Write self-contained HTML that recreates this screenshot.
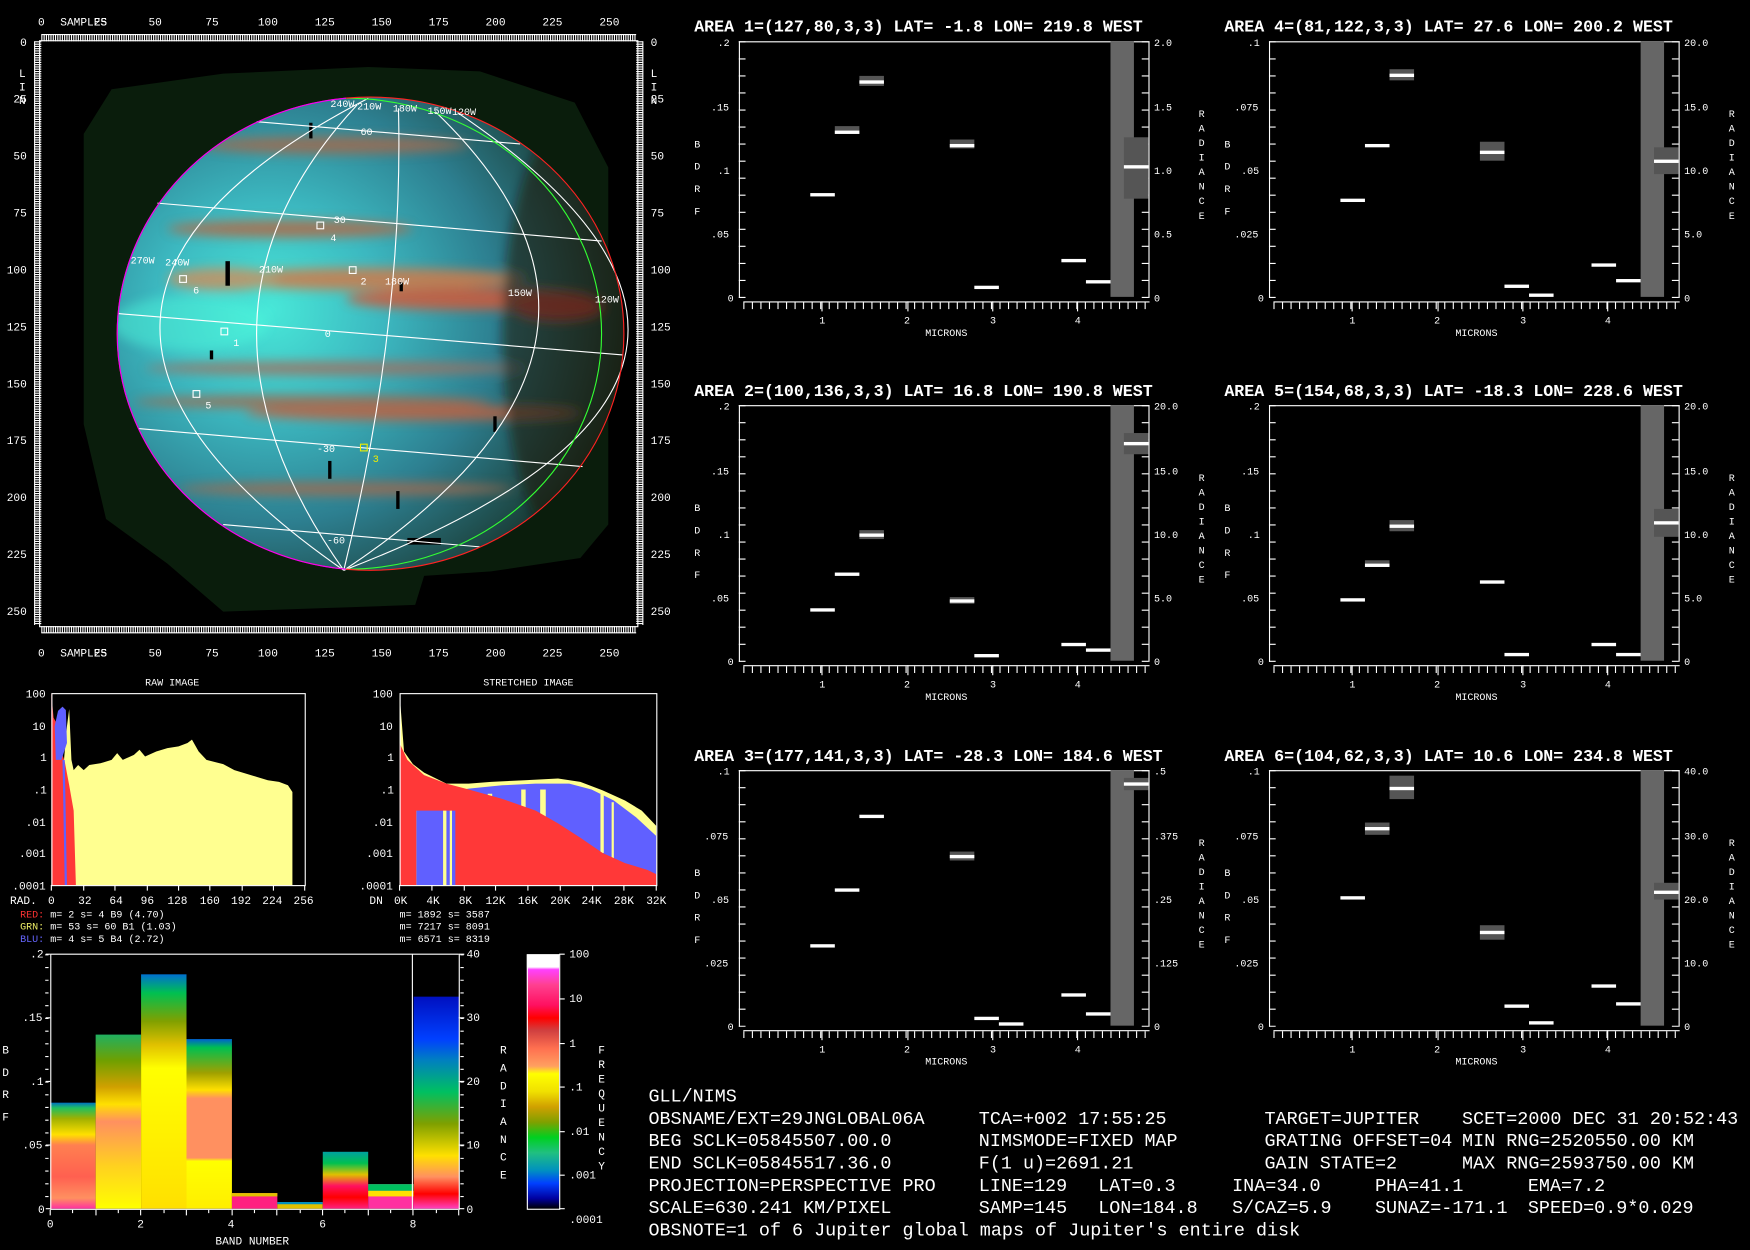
<!DOCTYPE html>
<html><head><meta charset="utf-8"><style>
html,body{margin:0;padding:0;background:#000;width:1750px;height:1250px;overflow:hidden}
svg{display:block}
text{font-family:"Liberation Mono",monospace;fill:#fff}
</style></head><body>
<svg width="1750" height="1250" viewBox="0 0 1568 1120" xmlns="http://www.w3.org/2000/svg">
<defs>
<radialGradient id="pl" cx="0.3" cy="0.45" r="0.75">
<stop offset="0" stop-color="#48e8d8"/><stop offset="0.3" stop-color="#3cb8c0"/><stop offset="0.6" stop-color="#2d7f90"/><stop offset="0.85" stop-color="#1e4a48"/><stop offset="1" stop-color="#10251a"/>
</radialGradient>
<filter id="bl"><feGaussianBlur stdDeviation="5"/></filter>
<clipPath id="disk"><ellipse cx="332" cy="299" rx="227" ry="212"/></clipPath>
<linearGradient id="cb" x1="0" y1="0" x2="0" y2="1">
<stop offset="0" stop-color="#fff"/><stop offset="0.05" stop-color="#fff"/><stop offset="0.06" stop-color="#ff40ff"/><stop offset="0.12" stop-color="#ff4090"/><stop offset="0.2" stop-color="#ff1060"/><stop offset="0.25" stop-color="#f00"/><stop offset="0.3" stop-color="#d04040"/><stop offset="0.37" stop-color="#ff7050"/><stop offset="0.44" stop-color="#ffa060"/><stop offset="0.47" stop-color="#ffff00"/><stop offset="0.54" stop-color="#f0e000"/><stop offset="0.6" stop-color="#d0a000"/><stop offset="0.66" stop-color="#80a000"/><stop offset="0.72" stop-color="#00d020"/><stop offset="0.78" stop-color="#20c080"/><stop offset="0.85" stop-color="#0090c0"/><stop offset="0.9" stop-color="#0040ff"/><stop offset="0.96" stop-color="#0000a0"/><stop offset="1" stop-color="#000"/>
</linearGradient>
<linearGradient id="b0" x1="0" y1="0" x2="0" y2="1"><stop offset="0" stop-color="#0070c0"/><stop offset="0.05" stop-color="#20c060"/><stop offset="0.15" stop-color="#a0b000"/><stop offset="0.3" stop-color="#ffe000"/><stop offset="0.4" stop-color="#ff8050"/><stop offset="0.7" stop-color="#ff6050"/><stop offset="0.9" stop-color="#ff9060"/><stop offset="1" stop-color="#ff30a0"/></linearGradient>
<linearGradient id="b1" x1="0" y1="0" x2="0" y2="1"><stop offset="0" stop-color="#20b060"/><stop offset="0.15" stop-color="#70a000"/><stop offset="0.3" stop-color="#d0a000"/><stop offset="0.4" stop-color="#ffe000"/><stop offset="0.5" stop-color="#ff9060"/><stop offset="0.75" stop-color="#ffd020"/><stop offset="1" stop-color="#ffff00"/></linearGradient>
<linearGradient id="b2" x1="0" y1="0" x2="0" y2="1"><stop offset="0" stop-color="#0070d0"/><stop offset="0.08" stop-color="#00c050"/><stop offset="0.2" stop-color="#80a000"/><stop offset="0.3" stop-color="#e0c000"/><stop offset="0.4" stop-color="#ffff00"/><stop offset="1" stop-color="#ffe000"/></linearGradient>
<linearGradient id="b3" x1="0" y1="0" x2="0" y2="1"><stop offset="0" stop-color="#0060d0"/><stop offset="0.05" stop-color="#00c050"/><stop offset="0.2" stop-color="#a0a000"/><stop offset="0.3" stop-color="#ffe000"/><stop offset="0.35" stop-color="#ff9060"/><stop offset="0.7" stop-color="#ff9060"/><stop offset="0.72" stop-color="#ffff00"/><stop offset="1" stop-color="#ffee00"/></linearGradient>
<linearGradient id="b6" x1="0" y1="0" x2="0" y2="1"><stop offset="0" stop-color="#00a0a0"/><stop offset="0.2" stop-color="#00c050"/><stop offset="0.4" stop-color="#e0c000"/><stop offset="0.6" stop-color="#ff1060"/><stop offset="0.8" stop-color="#f00"/><stop offset="1" stop-color="#ff2080"/></linearGradient>
<linearGradient id="b8" x1="0" y1="0" x2="0" y2="1"><stop offset="0" stop-color="#0010c0"/><stop offset="0.2" stop-color="#0040ff"/><stop offset="0.3" stop-color="#0080c0"/><stop offset="0.45" stop-color="#00c060"/><stop offset="0.6" stop-color="#80a000"/><stop offset="0.75" stop-color="#ffe000"/><stop offset="0.85" stop-color="#ff9060"/><stop offset="0.93" stop-color="#f00"/><stop offset="1" stop-color="#ff40c0"/></linearGradient>
</defs>

<!-- ===== IMAGE PANEL ===== -->
<path d="M75,120 L100,80 L200,66 L330,60 L430,64 L515,92 L545,150 L545,470 L520,500 L440,512 L380,516 L372,542 L200,548 L150,505 L95,465 L75,380 Z" fill="#0a1d0c"/>
<ellipse cx="332" cy="299" rx="227" ry="212" fill="url(#pl)"/>
<g clip-path="url(#disk)" filter="url(#bl)" opacity="0.85">
<ellipse cx="300" cy="130" rx="120" ry="8" fill="#a06a50"/>
<ellipse cx="260" cy="205" rx="110" ry="8" fill="#b06a48"/>
<ellipse cx="330" cy="250" rx="140" ry="10" fill="#d07a4a"/>
<ellipse cx="420" cy="268" rx="110" ry="10" fill="#d05a3a"/>
<ellipse cx="500" cy="275" rx="40" ry="12" fill="#e04030"/>
<ellipse cx="200" cy="250" rx="50" ry="10" fill="#c89060"/>
<ellipse cx="300" cy="330" rx="170" ry="6" fill="#a07060"/>
<ellipse cx="280" cy="360" rx="160" ry="6" fill="#a06a50"/>
<ellipse cx="370" cy="370" rx="150" ry="7" fill="#c06040"/>
<ellipse cx="310" cy="438" rx="150" ry="6" fill="#a06a50"/>
<ellipse cx="510" cy="300" rx="60" ry="190" fill="#201008" opacity="0.6"/>
<ellipse cx="170" cy="290" rx="70" ry="25" fill="#50ffe0" opacity="0.5"/>
</g>
<g fill="#000">
<rect x="202" y="234" width="4" height="22"/><rect x="277" y="110" width="3" height="14"/><rect x="294" y="413" width="3" height="16"/><rect x="355" y="440" width="3" height="16"/><rect x="188" y="314" width="3" height="8"/><rect x="358" y="253" width="3" height="8"/><rect x="442" y="373" width="3" height="14"/><rect x="365" y="482" width="30" height="6"/>
</g>
<g fill="none" stroke="#fff" stroke-width="1">
<path d="M106,281 L558,318"/><path d="M141,182 L539,216"/><path d="M230,109 L466,129"/><path d="M124,384 L522,418"/><path d="M200,470 L430,490"/>
<path d="M330,88 Q-32,275 308,511"/><path d="M320,94 Q146,281 308,511"/><path d="M357,97 Q362,290 308,511"/><path d="M390,100 Q610,311 308,511"/><path d="M410,101 Q760,337 308,511"/>
</g>
<path d="M310,88 A229,211 0 0,1 310,510" fill="none" stroke="#3f3" stroke-width="1"/>
<ellipse cx="332" cy="299" rx="227" ry="212" fill="none" stroke="#f22" stroke-width="1"/>
<path d="M310,88 A227,212 0 0,0 310,510" fill="none" stroke="#e0f" stroke-width="1"/>
<g font-size="9">
<text x="117" y="236">270W</text><text x="148" y="238">240W</text><text x="232" y="244">210W</text><text x="345" y="255">180W</text><text x="455" y="265">150W</text><text x="533" y="271">120W</text>
<text x="296" y="96">240W</text><text x="320" y="98">210W</text><text x="352" y="100">180W</text><text x="383" y="102">150W</text><text x="405" y="103">120W</text>
<text x="323" y="121">60</text><text x="299" y="200">30</text><text x="291" y="302">0</text><text x="284" y="405">-30</text><text x="293" y="487">-60</text>
<text x="296" y="216">4</text><text x="323" y="255">2</text><text x="173" y="263">6</text><text x="209" y="310">1</text><text x="184" y="366">5</text><text x="334" y="414" style="fill:#ee0">3</text>
</g>
<g fill="none" stroke="#fff" stroke-width="1">
<rect x="284" y="199" width="6" height="6"/><rect x="313" y="239" width="6" height="6"/><rect x="161" y="247" width="6" height="6"/><rect x="198" y="294" width="6" height="6"/><rect x="173" y="350" width="6" height="6"/>
</g>
<rect x="323" y="398" width="6" height="6" fill="none" stroke="#ee0"/>
<rect x="35.5" y="36.5" width="536" height="525" fill="none" stroke="#fff"/>
<g stroke="#fff" fill="none">
<line x1="37" y1="31" x2="570" y2="31"/><line x1="37" y1="567" x2="570" y2="567"/>
<line x1="31" y1="37" x2="31" y2="560"/><line x1="576" y1="37" x2="576" y2="560"/>
<line x1="37" y1="34" x2="570" y2="34" stroke-width="6" stroke-dasharray="1 1.044"/>
<line x1="37" y1="564" x2="570" y2="564" stroke-width="6" stroke-dasharray="1 1.044"/>
<line x1="34" y1="37" x2="34" y2="560" stroke-width="6" stroke-dasharray="1 1.044"/>
<line x1="573" y1="37" x2="573" y2="560" stroke-width="6" stroke-dasharray="1 1.044"/>
</g>
<g font-size="10">
<text x="34" y="23">0</text><text x="54" y="23">SAMPLES</text><text x="84" y="23">25</text><text x="133" y="23">50</text><text x="184" y="23">75</text><text x="231" y="23">100</text><text x="282" y="23">125</text><text x="333" y="23">150</text><text x="384" y="23">175</text><text x="435" y="23">200</text><text x="486" y="23">225</text><text x="537" y="23">250</text>
<text x="34" y="588">0</text><text x="54" y="588">SAMPLES</text><text x="84" y="588">25</text><text x="133" y="588">50</text><text x="184" y="588">75</text><text x="231" y="588">100</text><text x="282" y="588">125</text><text x="333" y="588">150</text><text x="384" y="588">175</text><text x="435" y="588">200</text><text x="486" y="588">225</text><text x="537" y="588">250</text>
<text x="18" y="41">0</text><text x="17" y="69">L</text><text x="17" y="81">I</text><text x="17" y="93">N</text><text x="12" y="92">25</text><text x="12" y="143">50</text><text x="12" y="194">75</text><text x="6" y="245">100</text><text x="6" y="296">125</text><text x="6" y="347">150</text><text x="6" y="398">175</text><text x="6" y="449">200</text><text x="6" y="500">225</text><text x="6" y="551">250</text>
<text x="583" y="41">0</text><text x="583" y="69">L</text><text x="583" y="81">I</text><text x="583" y="93">N</text><text x="583" y="92">25</text><text x="583" y="143">50</text><text x="583" y="194">75</text><text x="583" y="245">100</text><text x="583" y="296">125</text><text x="583" y="347">150</text><text x="583" y="398">175</text><text x="583" y="449">200</text><text x="583" y="500">225</text><text x="583" y="551">250</text>
</g>

<!-- ===== HISTOGRAMS ===== -->
<g font-size="9">
<text x="130" y="614">RAW IMAGE</text><text x="433" y="614">STRETCHED IMAGE</text>
</g>
<g transform="matrix(1 0 0 0.7577 0 150.5)">
<polygon points="57,848 57,705 60,660 62,640 64,700 66,712 70,706 75,712 80,706 90,704 100,700 105,692 110,700 120,694 125,688 130,696 140,690 150,686 160,684 168,680 172,676 178,690 185,700 200,705 210,712 220,716 230,720 240,724 250,726 258,730 262,738 262,848" fill="#ffff90"/>
<polygon points="46,848 46,621 48,650 52,660 55,690 58,702 62,730 66,760 68,848" fill="#ff3838"/>
<polygon points="49,660 52,642 56,637 59,641 60,680 55,700 50,700" fill="#6060ff"/>
<polygon points="56,700 58,848 60,848 58,700" fill="#6060ff"/>
<polygon points="358,848 358,621 362,690 370,705 380,715 400,728 420,728 440,726 470,724 500,722 520,726 540,736 560,748 575,760 588,778 588,848" fill="#ffff90"/>
<polygon points="373,848 373,740 400,738 420,734 450,730 480,728 510,728 530,735 550,748 570,768 588,790 588,848" fill="#6060ff"/>
<g fill="#ffff90"><rect x="397" y="740" width="3" height="108"/><rect x="403" y="740" width="2" height="108"/><rect x="437" y="740" width="4" height="50"/><rect x="467" y="735" width="4" height="50"/><rect x="484" y="735" width="5" height="60"/><rect x="538" y="740" width="3" height="70"/><rect x="548" y="750" width="2" height="70"/></g>
<polygon points="358,848 358,680 365,700 380,718 400,728 420,735 450,746 480,760 500,775 520,792 540,810 560,822 580,830 588,835 588,848 408,848 408,760 373,760 373,848" fill="#ff3838"/>
</g>
<g fill="none" stroke="#fff">
<rect x="46.5" y="621.5" width="227" height="172"/><rect x="358.5" y="621.5" width="230" height="172"/>
<path d="M46,793 v5 M75,793 v5 M103,793 v5 M132,793 v5 M160,793 v5 M188,793 v5 M217,793 v5 M245,793 v5 M273,793 v5"/>
<path d="M358,793 v5 M387,793 v5 M416,793 v5 M444,793 v5 M473,793 v5 M502,793 v5 M531,793 v5 M559,793 v5 M588,793 v5"/>
</g>
<g font-size="10">
<text x="23" y="625">100</text><text x="29" y="654">10</text><text x="36" y="682">1</text><text x="30" y="711">.1</text><text x="23" y="740">.01</text><text x="17" y="768">.001</text><text x="11" y="797">.0001</text>
<text x="334" y="625">100</text><text x="340" y="654">10</text><text x="347" y="682">1</text><text x="341" y="711">.1</text><text x="334" y="740">.01</text><text x="328" y="768">.001</text><text x="322" y="797">.0001</text>
<text x="9" y="810">RAD.</text><text x="43" y="810">0</text><text x="70" y="810">32</text><text x="98" y="810">64</text><text x="126" y="810">96</text><text x="150" y="810">128</text><text x="179" y="810">160</text><text x="207" y="810">192</text><text x="235" y="810">224</text><text x="263" y="810">256</text>
<text x="331" y="810">DN</text><text x="353" y="810">0K</text><text x="382" y="810">4K</text><text x="411" y="810">8K</text><text x="435" y="810">12K</text><text x="464" y="810">16K</text><text x="493" y="810">20K</text><text x="521" y="810">24K</text><text x="550" y="810">28K</text><text x="579" y="810">32K</text>
</g>
<g font-size="9">
<text x="18" y="822"><tspan style="fill:#f33">RED:</tspan> m=    2 s=    4 B9 (4.70)</text>
<text x="18" y="833"><tspan style="fill:#ee6">GRN:</tspan> m=   53 s=   60 B1 (1.03)</text>
<text x="18" y="844"><tspan style="fill:#66f">BLU:</tspan> m=    4 s=    5 B4 (2.72)</text>
<text x="358" y="822">m= 1892 s= 3587</text><text x="358" y="833">m= 7217 s= 8091</text><text x="358" y="844">m= 6571 s= 8319</text>
</g>

<!-- ===== BAND CHART ===== -->
<rect x="45" y="988" width="40.7" height="95" fill="url(#b0)"/>
<rect x="85.7" y="927" width="40.7" height="156" fill="url(#b1)"/>
<rect x="126.4" y="873" width="40.7" height="210" fill="url(#b2)"/>
<rect x="167.1" y="931" width="40.7" height="152" fill="url(#b3)"/>
<rect x="207.8" y="1069" width="40.7" height="14" fill="#ff2080"/><rect x="207.8" y="1069" width="40.7" height="3" fill="#e0c000"/>
<rect x="248.5" y="1077" width="40.7" height="6" fill="#e0c000"/><rect x="248.5" y="1077" width="40.7" height="2" fill="#0090c0"/>
<rect x="289.2" y="1032" width="40.7" height="51" fill="url(#b6)"/>
<rect x="329.9" y="1061" width="40.7" height="22" fill="#ff30a0"/><rect x="329.9" y="1061" width="40.7" height="6" fill="#00c060"/><rect x="329.9" y="1067" width="40.7" height="5" fill="#ffe000"/>
<rect x="370.6" y="893" width="40.7" height="190" fill="url(#b8)"/>
<g stroke="#fff" fill="none">
<line x1="45" y1="855" x2="411" y2="855"/><line x1="45.5" y1="855" x2="45.5" y2="1084"/><line x1="45" y1="1083.5" x2="411" y2="1083.5"/><line x1="411.5" y1="855" x2="411.5" y2="1084"/><line x1="369.5" y1="855" x2="369.5" y2="1084"/>
<path d="M45,1084 v5 M65,1084 v3 M86,1084 v5 M106,1084 v3 M126,1084 v5 M147,1084 v3 M167,1084 v5 M187,1084 v3 M208,1084 v5 M228,1084 v3 M248,1084 v5 M269,1084 v3 M289,1084 v5 M309,1084 v3 M330,1084 v5 M350,1084 v3 M370,1084 v5 M391,1084 v3 M411,1084 v5"/>
<path d="M41,855 h4 M41,912 h4 M41,969 h4 M41,1026 h4 M41,1083 h4 M411,855 h5 M411,912 h5 M411,969 h5 M411,1026 h5 M411,1083 h5"/>
<line x1="42" y1="855" x2="42" y2="1083" stroke-width="3" stroke-dasharray="1 10.4"/>
<line x1="414" y1="855" x2="414" y2="1083" stroke-width="3" stroke-dasharray="1 10.4"/>
</g>
<g font-size="10">
<text x="27" y="858">.2</text><text x="20" y="915">.15</text><text x="27" y="972">.1</text><text x="20" y="1029">.05</text><text x="34" y="1087">0</text>
<text x="418" y="858">40</text><text x="418" y="915">30</text><text x="418" y="972">20</text><text x="418" y="1029">10</text><text x="418" y="1087">0</text>
<text x="42" y="1100">0</text><text x="123" y="1100">2</text><text x="204" y="1100">4</text><text x="286" y="1100">6</text><text x="367" y="1100">8</text>
<text x="193" y="1115">BAND NUMBER</text>
<text x="2" y="944">B</text><text x="2" y="964">D</text><text x="2" y="984">R</text><text x="2" y="1004">F</text>
<text x="448" y="944">R</text><text x="448" y="960">A</text><text x="448" y="976">D</text><text x="448" y="992">I</text><text x="448" y="1008">A</text><text x="448" y="1024">N</text><text x="448" y="1040">C</text><text x="448" y="1056">E</text>
<text x="536" y="944">F</text><text x="536" y="957">R</text><text x="536" y="970">E</text><text x="536" y="983">Q</text><text x="536" y="996">U</text><text x="536" y="1009">E</text><text x="536" y="1022">N</text><text x="536" y="1035">C</text><text x="536" y="1048">Y</text>
<text x="510" y="858">100</text><text x="510" y="898">10</text><text x="510" y="938">1</text><text x="510" y="977">.1</text><text x="510" y="1017">.01</text><text x="510" y="1056">.001</text><text x="510" y="1096">.0001</text>
</g>
<rect x="472" y="855" width="29" height="228" fill="url(#cb)"/>
<rect x="472.5" y="855.5" width="29" height="228" fill="none" stroke="#fff"/>
<path d="M501,855 h5 M501,895 h5 M501,935 h5 M501,974 h5 M501,1014 h5 M501,1053 h5 M501,1083 h5" stroke="#fff"/>

<!-- ===== SPECTRAL PLOTS ===== -->
<g id="ax">
<line x1="662" y1="37.5" x2="1030" y2="37.5" stroke="#fff"/>
<line x1="662.5" y1="37" x2="662.5" y2="267" stroke="#fff"/>
<line x1="1029.5" y1="37" x2="1029.5" y2="267" stroke="#fff"/>
<line x1="662" y1="37" x2="662" y2="267" stroke="#fff" stroke-width="6" stroke-dasharray="1 14.27" transform="translate(3,0)"/>
<line x1="1029" y1="37" x2="1029" y2="267" stroke="#fff" stroke-width="6" stroke-dasharray="1 14.27" transform="translate(-3,0)"/>
<line x1="666" y1="270.5" x2="1030" y2="270.5" stroke="#fff"/>
<line x1="666" y1="274" x2="1030" y2="274" stroke="#fff" stroke-width="6" stroke-dasharray="1 6.65"/>
<line x1="736.5" y1="270" x2="736.5" y2="279" stroke="#fff"/><line x1="813.5" y1="270" x2="813.5" y2="279" stroke="#fff"/><line x1="889.5" y1="270" x2="889.5" y2="279" stroke="#fff"/><line x1="965.5" y1="270" x2="965.5" y2="279" stroke="#fff"/>
<g font-size="9"><text x="734" y="290">1</text><text x="810" y="290">2</text><text x="887" y="290">3</text><text x="963" y="290">4</text><text x="829" y="301">MICRONS</text>
<text x="622" y="132">B</text><text x="622" y="152">D</text><text x="622" y="172">R</text><text x="622" y="192">F</text>
<text x="1074" y="105">R</text><text x="1074" y="118">A</text><text x="1074" y="131">D</text><text x="1074" y="144">I</text><text x="1074" y="157">A</text><text x="1074" y="170">N</text><text x="1074" y="183">C</text><text x="1074" y="196">E</text></g>
<rect x="995" y="37" width="21" height="229" fill="#666"/>
</g>
<use href="#ax" transform="translate(475,0)"/>
<use href="#ax" transform="translate(0,326)"/>
<use href="#ax" transform="translate(475,326)"/>
<use href="#ax" transform="translate(0,653)"/>
<use href="#ax" transform="translate(475,653)"/>
<g font-size="14.9" font-weight="bold">
<text x="622" y="28">AREA 1=(127,80,3,3) LAT=  -1.8 LON= 219.8 WEST</text>
<text x="1097" y="28">AREA 4=(81,122,3,3) LAT=  27.6 LON= 200.2 WEST</text>
<text x="622" y="355">AREA 2=(100,136,3,3) LAT=  16.8 LON= 190.8 WEST</text>
<text x="1097" y="355">AREA 5=(154,68,3,3) LAT= -18.3 LON= 228.6 WEST</text>
<text x="622" y="682">AREA 3=(177,141,3,3) LAT= -28.3 LON= 184.6 WEST</text>
<text x="1097" y="682">AREA 6=(104,62,3,3) LAT=  10.6 LON= 234.8 WEST</text>
</g>
<g font-size="9">
<text x="643" y="41">.2</text><text x="637" y="99">.15</text><text x="643" y="156">.1</text><text x="637" y="213">.05</text><text x="652" y="270">0</text>
<text x="1034" y="41">2.0</text><text x="1034" y="99">1.5</text><text x="1034" y="156">1.0</text><text x="1034" y="213">0.5</text><text x="1034" y="270">0</text>
<text x="1118" y="41">.1</text><text x="1106" y="99">.075</text><text x="1112" y="156">.05</text><text x="1106" y="213">.025</text><text x="1127" y="270">0</text>
<text x="1509" y="41">20.0</text><text x="1509" y="99">15.0</text><text x="1509" y="156">10.0</text><text x="1509" y="213">5.0</text><text x="1509" y="270">0</text>
<text x="643" y="367">.2</text><text x="637" y="425">.15</text><text x="643" y="482">.1</text><text x="637" y="539">.05</text><text x="652" y="596">0</text>
<text x="1034" y="367">20.0</text><text x="1034" y="425">15.0</text><text x="1034" y="482">10.0</text><text x="1034" y="539">5.0</text><text x="1034" y="596">0</text>
<text x="1118" y="367">.2</text><text x="1112" y="425">.15</text><text x="1118" y="482">.1</text><text x="1112" y="539">.05</text><text x="1127" y="596">0</text>
<text x="1509" y="367">20.0</text><text x="1509" y="425">15.0</text><text x="1509" y="482">10.0</text><text x="1509" y="539">5.0</text><text x="1509" y="596">0</text>
<text x="643" y="694">.1</text><text x="631" y="752">.075</text><text x="637" y="809">.05</text><text x="631" y="866">.025</text><text x="652" y="923">0</text>
<text x="1034" y="694">.5</text><text x="1034" y="752">.375</text><text x="1034" y="809">.25</text><text x="1034" y="866">.125</text><text x="1034" y="923">0</text>
<text x="1118" y="694">.1</text><text x="1106" y="752">.075</text><text x="1112" y="809">.05</text><text x="1106" y="866">.025</text><text x="1127" y="923">0</text>
<text x="1509" y="694">40.0</text><text x="1509" y="752">30.0</text><text x="1509" y="809">20.0</text><text x="1509" y="866">10.0</text><text x="1509" y="923">0</text>
</g>
<g fill="#555">
<rect x="770" y="68" width="22" height="9"/><rect x="748" y="113" width="22" height="7"/><rect x="851" y="125" width="22" height="8"/><rect x="1007" y="123" width="22" height="55"/>
<rect x="1245" y="62" width="22" height="10"/><rect x="1326" y="127" width="22" height="17"/><rect x="1482" y="132" width="22" height="24"/>
<rect x="770" y="475" width="22" height="8"/><rect x="851" y="535" width="22" height="6"/><rect x="1007" y="388" width="22" height="19"/>
<rect x="1245" y="466" width="22" height="10"/><rect x="1482" y="456" width="22" height="25"/><rect x="1223" y="502" width="22" height="6"/>
<rect x="851" y="763" width="22" height="8"/><rect x="1007" y="697" width="22" height="11"/>
<rect x="1223" y="737" width="22" height="11"/><rect x="1245" y="695" width="22" height="21"/><rect x="1326" y="829" width="22" height="13"/><rect x="1482" y="791" width="22" height="15"/>
</g>
<g fill="#fff">
<rect x="726" y="173" width="22" height="3"/><rect x="748" y="117" width="22" height="3"/><rect x="770" y="72" width="22" height="3"/><rect x="851" y="129" width="22" height="3"/><rect x="873" y="256" width="22" height="3"/><rect x="951" y="232" width="22" height="3"/><rect x="973" y="251" width="22" height="3"/><rect x="1007" y="148" width="22" height="3"/>
<rect x="1201" y="178" width="22" height="3"/><rect x="1223" y="129" width="22" height="3"/><rect x="1245" y="66" width="22" height="3"/><rect x="1326" y="135" width="22" height="3"/><rect x="1348" y="255" width="22" height="3"/><rect x="1370" y="263" width="22" height="3"/><rect x="1426" y="236" width="22" height="3"/><rect x="1448" y="250" width="22" height="3"/><rect x="1482" y="143" width="22" height="3"/>
<rect x="726" y="545" width="22" height="3"/><rect x="748" y="513" width="22" height="3"/><rect x="770" y="478" width="22" height="3"/><rect x="851" y="537" width="22" height="3"/><rect x="873" y="586" width="22" height="3"/><rect x="951" y="576" width="22" height="3"/><rect x="973" y="581" width="22" height="3"/><rect x="1007" y="396" width="22" height="3"/>
<rect x="1201" y="536" width="22" height="3"/><rect x="1223" y="505" width="22" height="3"/><rect x="1245" y="470" width="22" height="3"/><rect x="1326" y="520" width="22" height="3"/><rect x="1348" y="585" width="22" height="3"/><rect x="1426" y="576" width="22" height="3"/><rect x="1448" y="585" width="22" height="3"/><rect x="1482" y="467" width="22" height="3"/>
<rect x="726" y="846" width="22" height="3"/><rect x="748" y="796" width="22" height="3"/><rect x="770" y="730" width="22" height="3"/><rect x="851" y="766" width="22" height="3"/><rect x="873" y="911" width="22" height="3"/><rect x="895" y="916" width="22" height="3"/><rect x="951" y="890" width="22" height="3"/><rect x="973" y="907" width="22" height="3"/><rect x="1007" y="701" width="22" height="3"/>
<rect x="1201" y="803" width="22" height="3"/><rect x="1223" y="741" width="22" height="3"/><rect x="1245" y="705" width="22" height="3"/><rect x="1326" y="834" width="22" height="3"/><rect x="1348" y="900" width="22" height="3"/><rect x="1370" y="915" width="22" height="3"/><rect x="1426" y="882" width="22" height="3"/><rect x="1448" y="898" width="22" height="3"/><rect x="1482" y="798" width="22" height="3"/>
</g>

<!-- ===== BOTTOM TEXT ===== -->
<g font-size="16.5">
<text x="581" y="987">GLL/NIMS</text>
<text x="581" y="1007">OBSNAME/EXT=29JNGLOBAL06A</text><text x="877" y="1007">TCA=+002 17:55:25</text><text x="1133" y="1007">TARGET=JUPITER</text><text x="1310" y="1007">SCET=2000 DEC 31 20:52:43</text>
<text x="581" y="1027">BEG SCLK=05845507.00.0</text><text x="877" y="1027">NIMSMODE=FIXED MAP</text><text x="1133" y="1027">GRATING OFFSET=04</text><text x="1310" y="1027">MIN RNG=2520550.00 KM</text>
<text x="581" y="1047">END SCLK=05845517.36.0</text><text x="877" y="1047">F(1 u)=2691.21</text><text x="1133" y="1047">GAIN STATE=2</text><text x="1310" y="1047">MAX RNG=2593750.00 KM</text>
<text x="581" y="1067">PROJECTION=PERSPECTIVE PRO</text><text x="877" y="1067">LINE=129</text><text x="984" y="1067">LAT=0.3</text><text x="1104" y="1067">INA=34.0</text><text x="1232" y="1067">PHA=41.1</text><text x="1369" y="1067">EMA=7.2</text>
<text x="581" y="1087">SCALE=630.241 KM/PIXEL</text><text x="877" y="1087">SAMP=145</text><text x="984" y="1087">LON=184.8</text><text x="1104" y="1087">S/CAZ=5.9</text><text x="1232" y="1087">SUNAZ=-171.1</text><text x="1369" y="1087">SPEED=0.9*0.029</text>
<text x="581" y="1107">OBSNOTE=1 of 6 Jupiter global maps of Jupiter's entire disk</text>
</g>
</svg>
</body></html>
